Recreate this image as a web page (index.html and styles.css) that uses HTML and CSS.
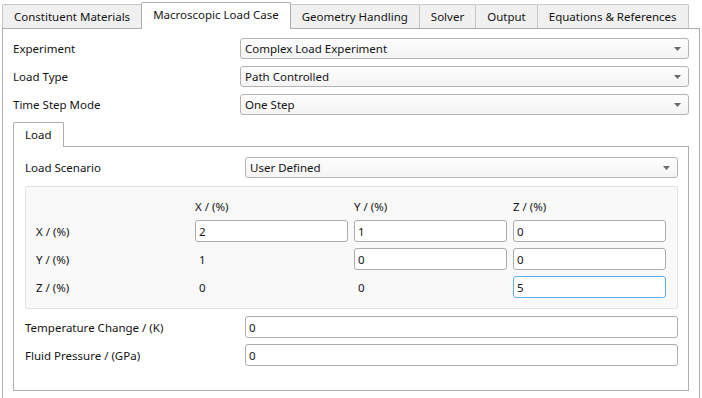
FILE: index.html
```html
<!DOCTYPE html>
<html>
<head>
    <meta charset="UTF-8">
    <meta name="viewport" content="width=device-width, initial-scale=1.0">
    <title>Macroscopic Load Case</title>
    <link rel="stylesheet" href="styles.css">
</head>
<body>
    <div class="tab-widget main-tabs">
        <div class="tab-bar">
            <div class="tab">Constituent Materials</div>
            <div class="tab active">Macroscopic Load Case</div>
            <div class="tab">Geometry Handling</div>
            <div class="tab">Solver</div>
            <div class="tab">Output</div>
            <div class="tab">Equations &amp; References</div>
        </div>
        <div class="tab-pane main-pane">
            <div class="form-row">
                <div class="form-label">Experiment</div>
                <div class="combo">
                    <span>Complex Load Experiment</span>
                    <svg class="combo-arrow" width="7" height="4" viewBox="0 0 7 4"><path d="M0 0H7L3.5 4Z" fill="#6b6b6b"/></svg>
                </div>
            </div>
            <div class="form-row">
                <div class="form-label">Load Type</div>
                <div class="combo">
                    <span>Path Controlled</span>
                    <svg class="combo-arrow" width="7" height="4" viewBox="0 0 7 4"><path d="M0 0H7L3.5 4Z" fill="#6b6b6b"/></svg>
                </div>
            </div>
            <div class="form-row">
                <div class="form-label">Time Step Mode</div>
                <div class="combo">
                    <span>One Step</span>
                    <svg class="combo-arrow" width="7" height="4" viewBox="0 0 7 4"><path d="M0 0H7L3.5 4Z" fill="#6b6b6b"/></svg>
                </div>
            </div>

            <div class="tab-widget sub-tabs">
                <div class="tab-bar">
                    <div class="tab active">Load</div>
                </div>
                <div class="tab-pane load-pane">
                    <div class="form-row">
                        <div class="form-label">Load Scenario</div>
                        <div class="combo">
                            <span>User Defined</span>
                            <svg class="combo-arrow" width="7" height="4" viewBox="0 0 7 4"><path d="M0 0H7L3.5 4Z" fill="#6b6b6b"/></svg>
                        </div>
                    </div>

                    <div class="strain-grid">
                        <div></div>
                        <div class="col-head">X / (%)</div>
                        <div class="col-head">Y / (%)</div>
                        <div class="col-head">Z / (%)</div>

                        <div class="row-head">X / (%)</div>
                        <input class="field" type="text" value="2">
                        <input class="field" type="text" value="1">
                        <input class="field" type="text" value="0">

                        <div class="row-head">Y / (%)</div>
                        <div class="value">1</div>
                        <input class="field" type="text" value="0">
                        <input class="field" type="text" value="0">

                        <div class="row-head">Z / (%)</div>
                        <div class="value">0</div>
                        <div class="value">0</div>
                        <input class="field focused" type="text" value="5">
                    </div>

                    <div class="form-row temp-row">
                        <div class="form-label">Temperature Change / (K)</div>
                        <input class="field" type="text" value="0">
                    </div>
                    <div class="form-row fluid-row">
                        <div class="form-label">Fluid Pressure / (GPa)</div>
                        <input class="field" type="text" value="0">
                    </div>
                </div>
            </div>
        </div>
    </div>
</body>
</html>
```

FILE: styles.css
```css
body {
    font-family: "Noto Sans", "Open Sans", sans-serif;
    font-size: 11.5px;
    color: #141414;
    background-color: #fff;
    margin: 0;
    padding: 0;
    overflow: hidden;
}

.main-tabs {
    margin: 2px 2px 0 2px;
}

.tab-bar {
    display: flex;
    align-items: flex-end;
}

.tab {
    height: 23px;
    line-height: 23px;
    padding: 0 11px;
    background-color: #f0f0f0;
    border: 1px solid #c6c6c6;
    border-bottom: none;
    border-radius: 2px 2px 0 0;
    margin-right: -1px;
    white-space: nowrap;
}

.tab.active {
    height: 26px;
    line-height: 24px;
    background-color: #fff;
    border-color: #adadad;
    margin-bottom: -1px;
    position: relative;
    z-index: 1;
}

.tab-pane {
    background-color: #fff;
    border: 1px solid #adadad;
}

.main-pane {
    box-sizing: border-box;
    height: 372px;
    padding: 9px 10px 0 10px;
}

.form-row {
    display: flex;
    align-items: center;
    margin-bottom: 7px;
}

.form-label {
    width: 227px;
    flex-shrink: 0;
}

.combo {
    flex-grow: 1;
    height: 19px;
    display: flex;
    align-items: center;
    justify-content: space-between;
    padding: 0 7px 0 4px;
    border: 1px solid #b4b4b4;
    border-radius: 3px;
    background: linear-gradient(#fdfdfd, #f4f4f4);
}

.combo-arrow {
    flex-shrink: 0;
}

.sub-tabs .tab.active {
    height: 24px;
    line-height: 24px;
}

.load-pane {
    padding: 10px 10px 24px 11px;
}

.load-pane .form-label {
    width: 220px;
}

.load-pane .form-row:first-child {
    margin-bottom: 8px;
}

.strain-grid {
    display: grid;
    grid-template-columns: repeat(4, 153px);
    grid-template-rows: 14px 22px 22px 22px;
    column-gap: 6px;
    row-gap: 6px;
    align-items: center;
    padding: 13px 10px 10px 10px;
    background-color: #f9f9f9;
    border: 1px solid #e2e2e2;
    border-radius: 2px;
    margin-bottom: 7px;
}

.col-head {
    line-height: 14px;
}

.value {
    padding-left: 4px;
}

.field {
    box-sizing: border-box;
    height: 22px;
    width: 100%;
    margin: 0;
    padding: 0 3px;
    font-family: inherit;
    font-size: 11.5px;
    color: #141414;
    background-color: #fff;
    border: 1px solid #acacac;
    border-radius: 3px;
    outline: none;
}

.field.focused {
    border-color: #5fb0ea;
}

.form-row .field {
    flex-grow: 1;
    width: auto;
}

.temp-row {
    margin-bottom: 6px;
}

.fluid-row {
    margin-bottom: 0;
}
```
